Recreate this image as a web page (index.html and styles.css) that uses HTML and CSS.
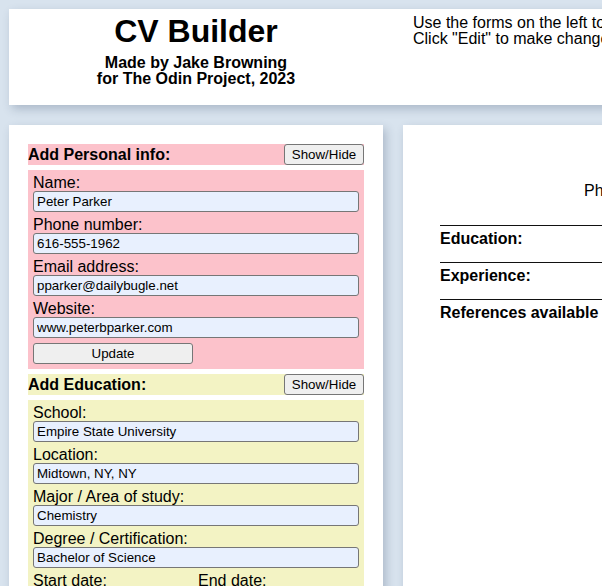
FILE: index.html
```html
<!DOCTYPE html>
<html lang="en">
<head>
<meta charset="utf-8">
<title>CV Builder</title>
<link rel="stylesheet" href="styles.css">
</head>
<body>
<div class="page">
  <header class="top">
    <div class="brand">
      <h1 class="title">CV Builder</h1>
      <p class="credit">Made by Jake Browning<br>for The Odin Project, 2023</p>
    </div>
    <p class="intro">Use the forms on the left to fill out the sections of your CV.<br>Click "Edit" to make changes to any section you have already added.</p>
  </header>

  <section class="editor">
    <div class="block personal">
      <div class="block-head">
        <h2 class="block-title">Add Personal info:</h2>
        <button type="button" class="btn btn-toggle">Show/Hide</button>
      </div>
      <form class="block-body">
        <label class="field-label" for="name">Name:</label>
        <input class="field" id="name" type="text" value="Peter Parker">
        <label class="field-label" for="phone">Phone number:</label>
        <input class="field" id="phone" type="text" value="616-555-1962">
        <label class="field-label" for="email">Email address:</label>
        <input class="field" id="email" type="text" value="pparker@dailybugle.net">
        <label class="field-label" for="site">Website:</label>
        <input class="field" id="site" type="text" value="www.peterbparker.com">
        <button type="button" class="btn btn-submit">Update</button>
      </form>
    </div>

    <div class="block education">
      <div class="block-head">
        <h2 class="block-title">Add Education:</h2>
        <button type="button" class="btn btn-toggle">Show/Hide</button>
      </div>
      <form class="block-body">
        <label class="field-label" for="school">School:</label>
        <input class="field" id="school" type="text" value="Empire State University">
        <label class="field-label" for="loc">Location:</label>
        <input class="field" id="loc" type="text" value="Midtown, NY, NY">
        <label class="field-label" for="major">Major / Area of study:</label>
        <input class="field" id="major" type="text" value="Chemistry">
        <label class="field-label" for="degree">Degree / Certification:</label>
        <input class="field" id="degree" type="text" value="Bachelor of Science">
        <div class="date-row">
          <div class="date-col">
            <label class="field-label" for="start">Start date:</label>
            <input class="field" id="start" type="text" value="">
          </div>
          <div class="date-col">
            <label class="field-label" for="end">End date:</label>
            <input class="field" id="end" type="text" value="">
          </div>
        </div>
        <button type="button" class="btn btn-submit">Add</button>
      </form>
    </div>
  </section>

  <section class="preview">
    <h2 class="cv-name">Peter Parker</h2>
    <ul class="cv-contact">
      <li>Phone: 616-555-1962</li>
      <li>Email: pparker@dailybugle.net</li>
      <li>Website: www.peterbparker.com</li>
    </ul>
    <div class="cv-section"><h3 class="cv-heading">Education:</h3></div>
    <div class="cv-section"><h3 class="cv-heading">Experience:</h3></div>
    <div class="cv-section"><h3 class="cv-heading">References available upon request</h3></div>
  </section>
</div>
</body>
</html>
```

FILE: styles.css
```css
html {
  overflow: hidden;
}

body {
  margin: 0;
  padding: 9px 0 0 9px;
  background: #d8e3ee;
  font-family: "Liberation Sans", Arial, sans-serif;
  font-size: 16px;
  color: #000;
}

.page {
  display: grid;
  grid-template-columns: 374px 1012px;
  column-gap: 20px;
  row-gap: 20px;
  align-items: start;
}

.top {
  grid-column: 1 / -1;
  display: grid;
  grid-template-columns: 374px 1fr;
  column-gap: 30px;
  background: #fff;
  padding: 6px 0 18px;
  box-shadow: 3px 4px 9px rgba(40, 60, 90, 0.25);
}

.brand {
  text-align: center;
}

.title {
  margin: -2px 0 5px;
  font-size: 32px;
  line-height: 37px;
  font-weight: bold;
}

.credit {
  margin: 0;
  font-weight: bold;
  line-height: 16px;
}

.intro {
  margin: 0;
  line-height: 16px;
  white-space: nowrap;
}

.editor {
  background: #fff;
  padding: 19px 19px 20px;
  box-shadow: 3px 4px 9px rgba(40, 60, 90, 0.25);
}

.block + .block {
  margin-top: 5px;
}

.block-head {
  display: flex;
  align-items: center;
  justify-content: space-between;
  height: 21px;
}

.block-title {
  margin: 0;
  font-size: 16px;
  font-weight: bold;
  line-height: 18px;
}

.block-body {
  margin-top: 5px;
  padding: 2px 5px 5px;
}

.personal .block-head,
.personal .block-body {
  background: #fcc2cb;
}

.education .block-head,
.education .block-body {
  background: #f3f3c4;
}

.field-label {
  display: block;
  line-height: 18px;
  padding-top: 2px;
  margin-bottom: -1px;
}

.field {
  display: block;
  box-sizing: border-box;
  width: 100%;
  height: 21px;
  margin: 0 0 2px;
  padding: 0 3px;
  border: 1px solid #767676;
  border-radius: 3px;
  background: #e8f0fe;
  font-family: "Liberation Sans", Arial, sans-serif;
  font-size: 13.333px;
  color: #000;
}

.btn {
  box-sizing: border-box;
  height: 21px;
  padding: 0;
  border: 1px solid #767676;
  border-radius: 3px;
  background: #efefef;
  font-family: "Liberation Sans", Arial, sans-serif;
  font-size: 13.333px;
  color: #000;
}

.btn-toggle {
  width: 80px;
}

.btn-submit {
  display: block;
  width: 160px;
  margin-top: 5px;
}

.date-row {
  display: grid;
  grid-template-columns: 1fr 1fr;
  column-gap: 4px;
}

.preview {
  box-sizing: border-box;
  min-height: 1300px;
  background: #fff;
  padding: 18px 37px 40px;
  box-shadow: 3px 4px 9px rgba(40, 60, 90, 0.25);
}

.cv-name {
  margin: 0 0 7px;
  text-align: center;
  font-size: 28px;
  line-height: 32px;
}

.cv-contact {
  list-style: none;
  margin: 0 0 25px;
  padding: 0;
  display: flex;
  justify-content: center;
  column-gap: 24px;
  line-height: 18px;
}

.cv-section {
  border-top: 1px solid #111;
  padding: 4px 0 14px;
}

.cv-heading {
  margin: 0;
  font-size: 16px;
  line-height: 18px;
  font-weight: bold;
}
```
